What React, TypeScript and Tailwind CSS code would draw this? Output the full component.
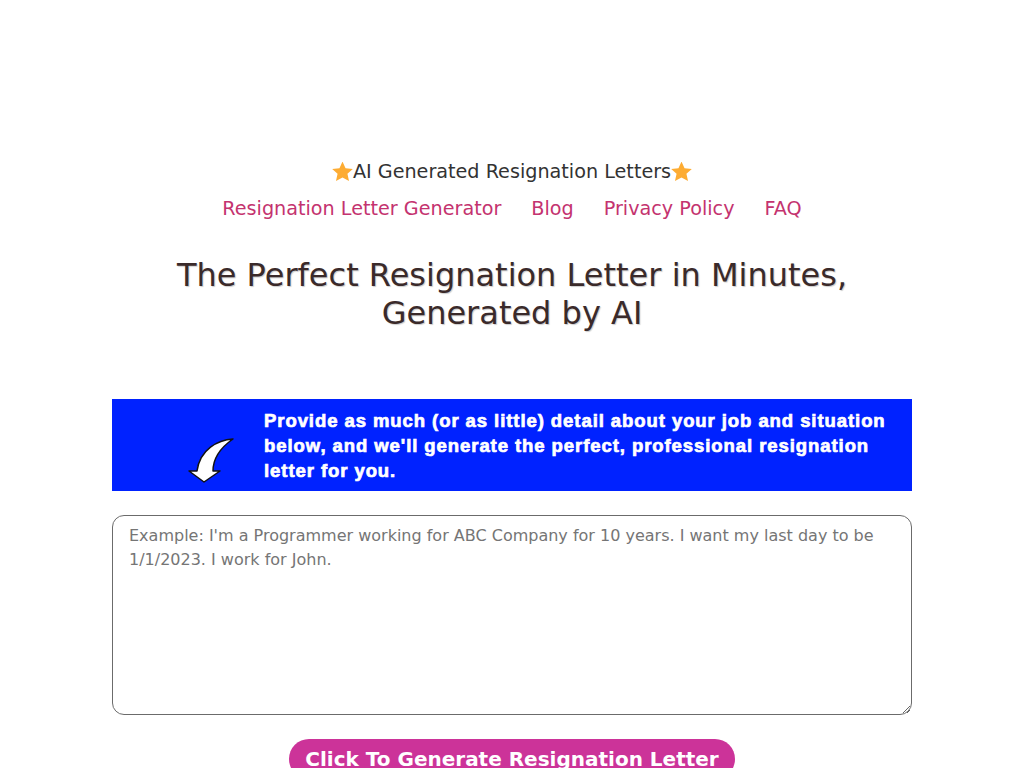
export default function App() {
  const Star = () => (
    <svg width="21" height="21" viewBox="0 0.800 20 20" className="shrink-0">
      <path d="M10 .4l2.900 6.300 6.900.8-5.100 4.600 1.500 6.900L10 15.500 3.800 19l1.500-6.900L.2 7.500l6.900-.8z" fill="#fdac33" />
    </svg>
  );
  return (
    <div className="bg-white font-['DejaVu_Sans',sans-serif] text-[#212529] h-[768px] overflow-hidden">
      <div className="pt-[160px] flex flex-col items-center">
        <div className="flex items-center justify-center text-[19.2px] leading-[24px] text-[#333]">
          <Star />
          <span>AI Generated Resignation Letters</span>
          <Star />
        </div>
        <nav className="mt-[13px] flex gap-[30px] text-[19.2px] leading-[24px] text-[#c4336f]">
          <a>Resignation Letter Generator</a>
          <a>Blog</a>
          <a>Privacy Policy</a>
          <a>FAQ</a>
        </nav>
        <h1 className="mt-[35px] w-[800px] text-center text-[32px] leading-[38px] font-normal text-[#3a2a2a] [text-shadow:1px_1px_1px_#ccc]">
          The Perfect Resignation Letter in Minutes,
          <br />
          Generated by AI
        </h1>
        <div className="mt-[67px] w-[800px] h-[92px] bg-[#0022ff] flex items-center font-['Liberation_Sans',sans-serif]">
          <div className="w-[152px] shrink-0 flex justify-end pr-[28px] pt-[34px]">
            <svg width="48" height="50" viewBox="0 0 48 50">
              <path
                d="M45 2C30 3 12 12 9 34L1 34L16 45L32 34L25 34C25 22 32 11 45 2Z"
                fill="#fff"
                stroke="#111"
                strokeWidth="1.500"
                strokeLinejoin="round"
              />
            </svg>
          </div>
          <p className="text-white font-bold text-[18.5px] leading-[25px] tracking-[0.93px] [-webkit-text-stroke:0.7px_white] w-[640px]">
            Provide as much (or as little) detail about your job and situation below, and we'll generate the perfect, professional resignation letter for you.
          </p>
        </div>
        <textarea
          className="mt-[24px] block w-[800px] h-[200px] border border-[#6b6b6b] rounded-[12px] px-4 py-[8px] text-[16px] leading-[24px] outline-none placeholder:text-[#757575]"
          placeholder="Example: I'm a Programmer working for ABC Company for 10 years. I want my last day to be 1/1/2023. I work for John."
        />
        <button className="mt-[24px] px-4 py-2 shrink-0 rounded-[24px] bg-[#cc3399] text-white font-bold text-[20px] leading-[24px] self-center whitespace-nowrap">
          Click To Generate Resignation Letter
        </button>
      </div>
    </div>
  );
}
